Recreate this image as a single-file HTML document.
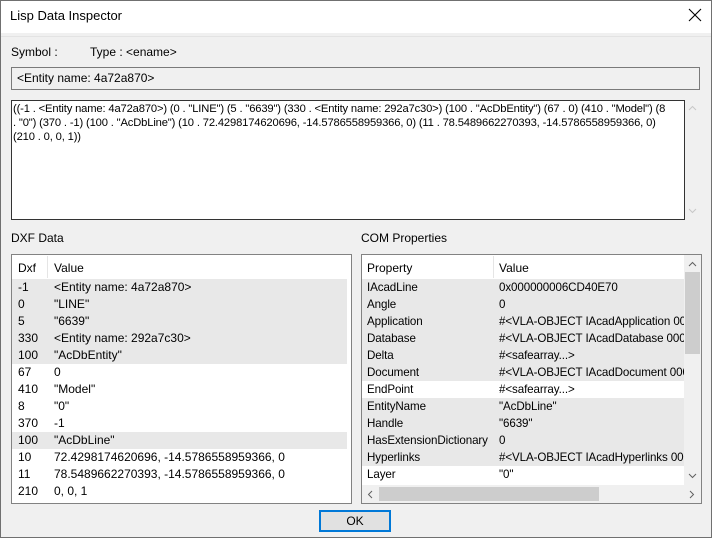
<!DOCTYPE html>
<html><head><style>
*{margin:0;padding:0;box-sizing:border-box}
body{width:712px;height:538px;overflow:hidden;font-family:"Liberation Sans",sans-serif;font-size:12px;color:#000;background:#f0f0f0;position:relative}
.a{position:absolute;white-space:nowrap}
.win{position:absolute;left:0;top:0;width:712px;height:538px;border:1px solid #707070}
.title{position:absolute;left:1px;top:1px;width:710px;height:32px;background:#fff}
.box{position:absolute;border:1px solid #828790;background:#fff}
.g{background:#e8e8e8}
</style></head><body>
<div class="win"></div>
<div class="title"></div>
<div class="a" style="left:10px;top:8px;font-size:13px">Lisp Data Inspector</div>
<svg class="a" style="left:688px;top:8px" width="14" height="14"><path d="M1 1L13 13M13 1L1 13" stroke="#000" stroke-width="1.1"/></svg>
<div class="a" style="left:1px;top:36px;width:710px;height:1px;background:#e3e3e3"></div>
<div class="a" style="left:11px;top:45px">Symbol :</div>
<div class="a" style="left:90px;top:45px">Type : &lt;ename&gt;</div>
<div class="a" style="left:11px;top:67px;width:689px;height:23px;border:1px solid #7a7a7a;background:#f0f0f0"></div>
<div class="a" style="left:17px;top:71px">&lt;Entity name: 4a72a870&gt;</div>
<div class="box" style="left:11px;top:100px;width:674px;height:120px;border-color:#333"></div>
<div class="a" style="left:13px;top:102px;line-height:14px;width:670px;overflow:hidden;height:60px;font-size:11.2px;letter-spacing:-0.15px">((-1 . &lt;Entity name: 4a72a870&gt;) (0 . "LINE") (5 . "6639") (330 . &lt;Entity name: 292a7c30&gt;) (100 . "AcDbEntity") (67 . 0) (410 . "Model") (8<br>. "0") (370 . -1) (100 . "AcDbLine") (10 . 72.4298174620696, -14.5786558959366, 0) (11 . 78.5489662270393, -14.5786558959366, 0)<br>(210 . 0, 0, 1))</div>
<svg class="a" style="left:688px;top:105px" width="9" height="6"><path d="M1 5L4.5 1.5L8 5" stroke="#c8c8c8" fill="none"/></svg>
<svg class="a" style="left:688px;top:208px" width="9" height="6"><path d="M1 1L4.5 4.5L8 1" stroke="#c8c8c8" fill="none"/></svg>
<div class="a" style="left:11px;top:231px">DXF Data</div>
<div class="a" style="left:361px;top:231px">COM Properties</div>

<div class="box" style="left:11px;top:254px;width:341px;height:250px;border-color:#828282"></div>
<div class="a" style="left:47px;top:256px;width:1px;height:22px;background:#e5e5e5"></div>
<div class="a" style="left:18px;top:261px">Dxf</div><div class="a" style="left:54px;top:261px">Value</div>
<div class="a g" style="left:12px;top:279px;width:335px;height:85px"></div>
<div class="a g" style="left:12px;top:432px;width:335px;height:17px"></div>
<div style="position:absolute;left:18px;top:279px;line-height:17px">-1<br>0<br>5<br>330<br>100<br>67<br>410<br>8<br>370<br>100<br>10<br>11<br>210</div>
<div style="position:absolute;left:54px;top:279px;line-height:17px;white-space:nowrap">&lt;Entity name: 4a72a870&gt;<br>"LINE"<br>"6639"<br>&lt;Entity name: 292a7c30&gt;<br>"AcDbEntity"<br>0<br>"Model"<br>"0"<br>-1<br>"AcDbLine"<br>72.4298174620696, -14.5786558959366, 0<br>78.5489662270393, -14.5786558959366, 0<br>0, 0, 1</div>

<div class="box" style="left:361px;top:254px;width:341px;height:250px;border-color:#828282;overflow:hidden">
<div class="a" style="left:131px;top:1px;width:1px;height:22px;background:#e5e5e5"></div>
<div class="a" style="left:5px;top:6px">Property</div><div class="a" style="left:137px;top:6px">Value</div>
<div class="a g" style="left:0;top:24px;width:322px;height:102px"></div>
<div class="a g" style="left:0;top:143px;width:322px;height:68px"></div>
<div style="position:absolute;left:5px;top:24px;line-height:17px;white-space:nowrap;font-size:11.6px;letter-spacing:-0.1px">IAcadLine<br>Angle<br>Application<br>Database<br>Delta<br>Document<br>EndPoint<br>EntityName<br>Handle<br>HasExtensionDictionary<br>Hyperlinks<br>Layer</div>
<div style="position:absolute;left:137px;top:24px;width:185px;overflow:hidden;line-height:17px;white-space:nowrap;font-size:11.6px;letter-spacing:-0.1px">0x000000006CD40E70<br>0<br>#&lt;VLA-OBJECT IAcadApplication 00000000<br>#&lt;VLA-OBJECT IAcadDatabase 000000000<br>#&lt;safearray...&gt;<br>#&lt;VLA-OBJECT IAcadDocument 000000000<br>#&lt;safearray...&gt;<br>"AcDbLine"<br>"6639"<br>0<br>#&lt;VLA-OBJECT IAcadHyperlinks 00000000<br>"0"</div>
<div class="a" style="left:322px;top:0;width:17px;height:230px;background:#f0f0f0"></div>
<div class="a" style="left:323px;top:17px;width:15px;height:82px;background:#cdcdcd"></div>
<svg class="a" style="left:326px;top:6px" width="9" height="6"><path d="M1 5L4.5 1.5L8 5" stroke="#606060" fill="none"/></svg>
<svg class="a" style="left:326px;top:218px" width="9" height="6"><path d="M1 1L4.5 4.5L8 1" stroke="#606060" fill="none"/></svg>
<div class="a" style="left:0;top:230px;width:339px;height:18px;background:#f0f0f0"></div>
<div class="a" style="left:17px;top:232px;width:220px;height:14px;background:#cdcdcd"></div>
<svg class="a" style="left:5px;top:235px" width="6" height="9"><path d="M5 1L1.5 4.5L5 8" stroke="#606060" fill="none"/></svg>
<svg class="a" style="left:327px;top:235px" width="6" height="9"><path d="M1 1L4.5 4.5L1 8" stroke="#606060" fill="none"/></svg>
</div>

<div class="a" style="left:319px;top:510px;width:72px;height:22px;border:2px solid #0078d7;background:#e1e1e1;text-align:center;line-height:18px">OK</div>
</body></html>
